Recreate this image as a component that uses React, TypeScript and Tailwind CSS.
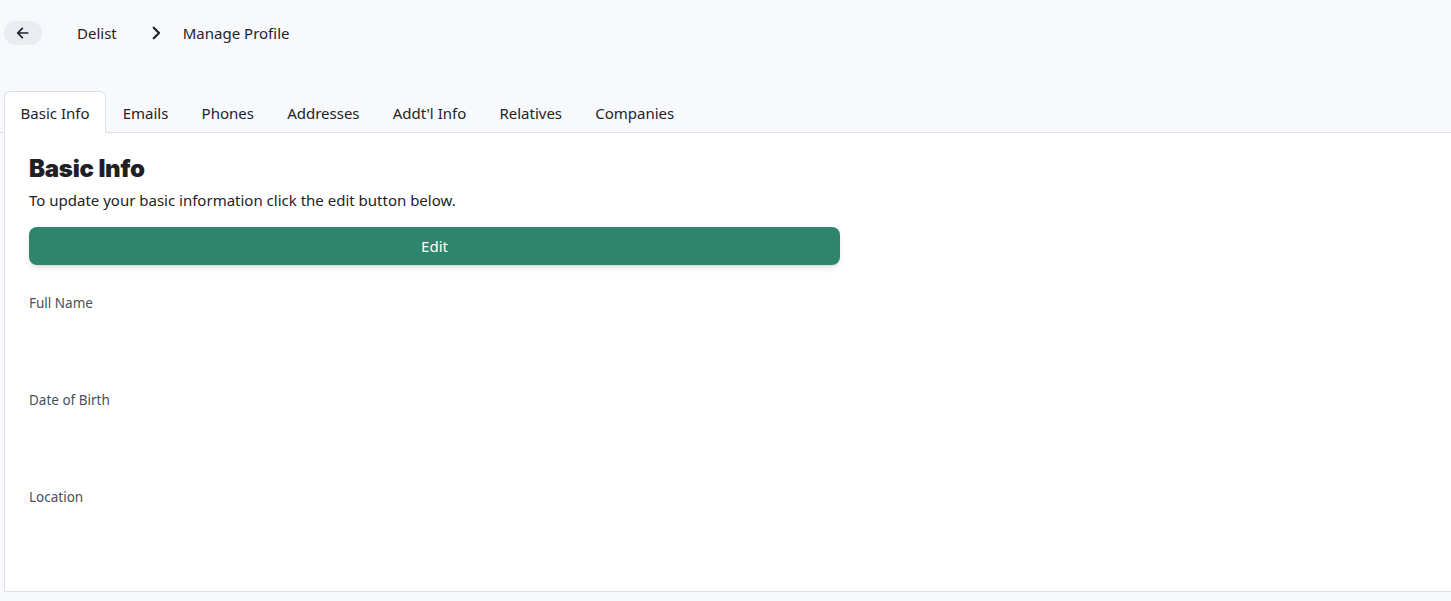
import React, { useState } from 'react';

const tabs = ['Basic Info', 'Emails', 'Phones', 'Addresses', "Addt'l Info", 'Relatives', 'Companies'];

const fields = ['Full Name', 'Date of Birth', 'Location'];

const App: React.FC = () => {
    const [activeTab, setActiveTab] = useState('Basic Info');

    return (
        <div className="min-h-[601px] bg-[#f8f9fc] overflow-hidden text-[#1f2328]" style={{ fontFamily: '"Noto Sans", "Open Sans", sans-serif' }}>
            <header className="h-[66px] flex items-center pl-1">
                <button className="w-[38px] h-[24px] rounded-full bg-[#e9edf2] flex items-center justify-center">
                    <svg className="w-4 h-4" fill="none" stroke="currentColor" viewBox="0 0 24 24">
                        <path strokeLinecap="round" strokeLinejoin="round" strokeWidth={2.6} d="M19 12H5M11 5l-7 7 7 7" />
                    </svg>
                </button>
                <span className="ml-[35px] text-[15px]">Delist</span>
                <svg className="w-[18px] h-[18px] ml-[30px]" fill="none" stroke="currentColor" viewBox="0 0 24 24">
                    <path strokeLinecap="round" strokeLinejoin="round" strokeWidth={3} d="M9 5l7 7-7 7" />
                </svg>
                <span className="ml-[18px] text-[15px]">Manage Profile</span>
            </header>

            <nav className="mt-[25px] flex pl-1 border-b border-[#dde0e6]">
                {tabs.map(tab => (
                    <button
                        key={tab}
                        onClick={() => setActiveTab(tab)}
                        className={`px-[15.6px] h-[42px] pt-[3px] text-[15px] rounded-t-md -mb-px border ${activeTab === tab ? 'bg-white border-[#dde0e6] border-b-white' : 'border-transparent'}`}
                    >
                        {tab}
                    </button>
                ))}
            </nav>

            <main className="ml-1 -mr-4 h-[459px] bg-white border-l border-b border-[#dde0e6] px-6 pt-[21px]">
                <h1 className="text-[24px] leading-[30px] font-black tracking-[-0.01em] text-[#1e2025]" style={{ fontFamily: 'Inter, sans-serif' }}>Basic Info</h1>
                <p className="mt-[5px] text-[15px] leading-[22px]">To update your basic information click the edit button below.</p>
                <button className="mt-[16px] w-[811px] h-[38px] rounded-lg bg-[#2d856c] text-white text-[15px] shadow-md shadow-black/10">
                    Edit
                </button>
                <div className="mt-[25px] flex flex-col">
                    {fields.map(field => (
                        <div key={field} className="h-[97px]">
                            <label className="text-[13.5px] leading-[18px] text-[#4a4f57]">{field}</label>
                        </div>
                    ))}
                </div>
            </main>
        </div>
    );
};

export default App;
